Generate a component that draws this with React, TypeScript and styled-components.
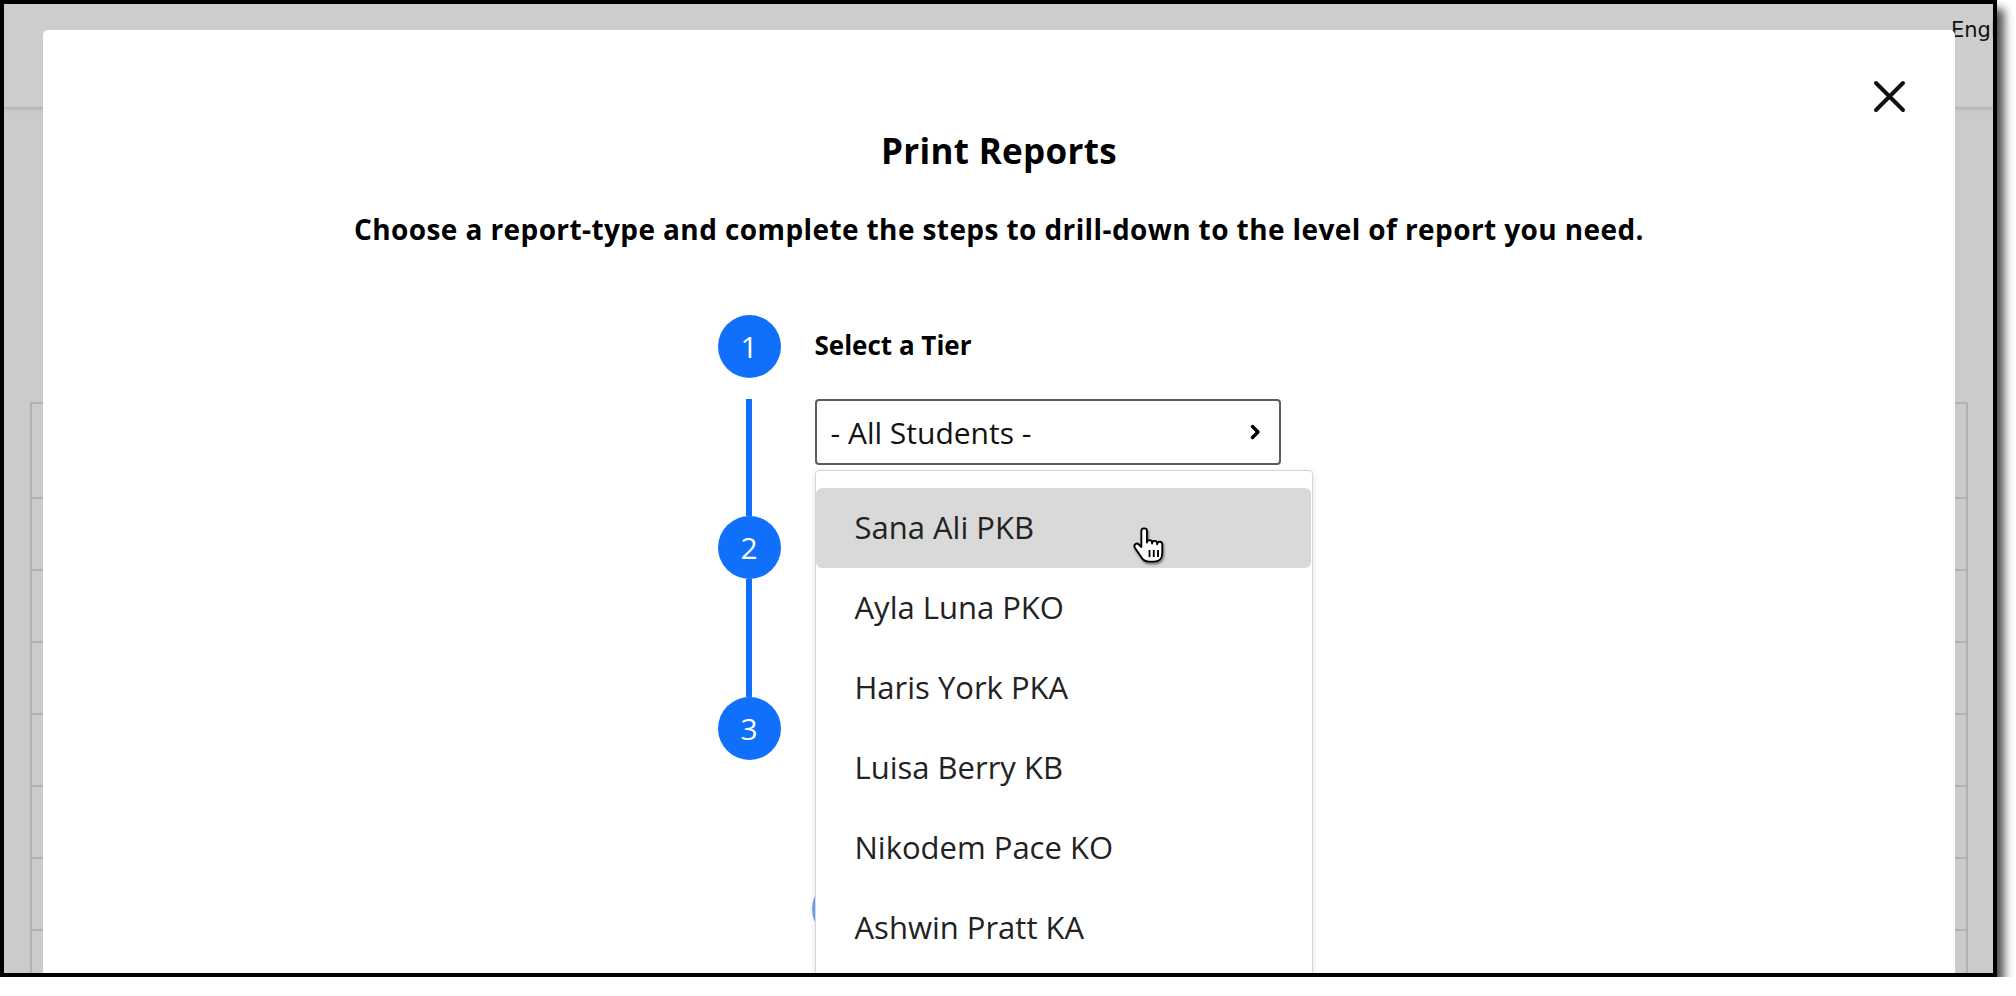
import React from "react";
import styled, { createGlobalStyle } from "styled-components";

const GlobalStyle = createGlobalStyle`
  html, body {
    margin: 0;
    padding: 0;
    background: #ffffff;
  }
  body {
    font-family: "Open Sans", "Liberation Sans", sans-serif;
  }
`;

const students = [
  "Sana Ali PKB",
  "Ayla Luna PKO",
  "Haris York PKA",
  "Luisa Berry KB",
  "Nikodem Pace KO",
  "Ashwin Pratt KA",
  "Milo Grant PKB",
];

const tableRows = [95, 72, 72, 72, 72, 72, 72, 72];

const steps = [
  { n: 1, label: "Select a Tier", value: "- All Students -", gap: 21, pad: 51, height: 66 },
  { n: 2, label: "Select a Student", value: "- Select -", gap: 3, pad: 49, height: 66 },
  { n: 3, label: "Select a Report", value: "- Select -", gap: 2, pad: 0, height: 64 },
];

const CloseIcon = () => (
  <svg width="33" height="33" viewBox="0 0 33 33" fill="none">
    <path d="M3 3 L30 30 M30 3 L3 30" stroke="#111" strokeWidth="4" strokeLinecap="round" />
  </svg>
);

const Chevron = () => (
  <svg width="12" height="16" viewBox="0 0 12 16" fill="none">
    <path d="M3.5 2.5 L9 8 L3.5 13.5" stroke="#000" strokeWidth="3.4" strokeLinecap="round" strokeLinejoin="round" />
  </svg>
);

const HandCursor = () => (
  <svg width="34" height="38" viewBox="0 0 20 22">
    <path
      d="M7 1.2 C6.2 1.2 5.5 1.9 5.5 2.7 V12.2 L4 10.7 C3.4 10.1 2.4 10.1 1.8 10.7 C1.3 11.2 1.3 12 1.7 12.6 L5.2 17.8 C6.2 19.6 7.6 20.8 10 20.8 H12.8 C15.9 20.8 17.8 18.8 17.8 15.8 V10.6 C17.8 9.8 17.1 9.1 16.3 9.1 C15.5 9.1 14.8 9.8 14.8 10.6 V10.1 C14.8 9.3 14.1 8.6 13.3 8.6 C12.5 8.6 11.8 9.3 11.8 10.1 V9.6 C11.8 8.8 11.1 8.1 10.3 8.1 C9.5 8.1 8.8 8.8 8.8 9.6 V2.7 C8.8 1.9 8.1 1.2 7.3 1.2 Z"
      fill="#fff"
      stroke="#000"
      strokeWidth="1.1"
      strokeLinejoin="round"
    />
    <path d="M10.3 14 V18 M12.8 14 V18 M15.3 14 V18" stroke="#000" strokeWidth="1.1" />
  </svg>
);

const App = () => {
  return (
    <>
      <GlobalStyle />
      <Frame>
        <Header>
          <Lang>English</Lang>
        </Header>
        <PageBody>
          <Table>
            {tableRows.map((h, i) => (
              <TableRow key={i} $height={h} />
            ))}
          </Table>
        </PageBody>

        <Modal>
          <CloseButton aria-label="Close">
            <CloseIcon />
          </CloseButton>
          <Title>Print Reports</Title>
          <Subtitle>
            Choose a report-type and complete the steps to drill-down to the level of report you need.
          </Subtitle>

          <Steps>
            {steps.map((s, i) => (
              <StepRow key={s.n}>
                <Rail>
                  <Circle>{s.n}</Circle>
                  {i < steps.length - 1 && <Connector $gap={i === 0 ? 21 : 0} />}
                </Rail>
                <StepBody $pad={s.pad}>
                  <StepLabel>{s.label}</StepLabel>
                  <FieldWrap $gap={s.gap}>
                    <SelectBox $height={s.height}>
                      <span>{s.value}</span>
                      <Chevron />
                    </SelectBox>
                    {i === 0 && (
                      <Dropdown>
                        {students.map((name, j) => (
                          <Option key={name} $active={j === 0}>
                            {name}
                          </Option>
                        ))}
                      </Dropdown>
                    )}
                  </FieldWrap>
                </StepBody>
              </StepRow>
            ))}
            <ButtonRow>
              <PrintButton disabled>Print</PrintButton>
            </ButtonRow>
          </Steps>
        </Modal>

        <Pointer>
          <HandCursor />
        </Pointer>
      </Frame>
    </>
  );
};

const Frame = styled.div`
  position: relative;
  box-sizing: border-box;
  width: 1997px;
  height: 977px;
  border: 4px solid #000;
  background: #cbcbcb;
  overflow: hidden;
  box-shadow: 7px 9px 9px rgba(0, 0, 0, 0.7);
`;

const Header = styled.div`
  height: 103px;
  background: #cdcdcd;
  box-shadow: 0 2px 4px rgba(0, 0, 0, 0.14);
  padding: 14px 0 0 1947px;
  box-sizing: border-box;
  white-space: nowrap;
  position: relative;
  z-index: 1;
`;

const Lang = styled.span`
  position: relative;
  z-index: 3;
  font-family: "DejaVu Sans", sans-serif;
  font-size: 21px;
  color: #111;
`;

const PageBody = styled.div`
  padding: 295px 25px 0 26px;
`;

const Table = styled.div`
  border: 2px solid #b1b1b1;
  border-bottom: none;
  display: flex;
  flex-direction: column;
`;

const TableRow = styled.div<{ $height: number }>`
  height: ${(p) => p.$height - 2}px;
  border-bottom: 2px solid #b1b1b1;
`;

const Modal = styled.div`
  position: absolute;
  left: 39px;
  top: 26px;
  width: 1912px;
  height: 1000px;
  background: #fff;
  border-radius: 5px;
  z-index: 2;
  display: flex;
  flex-direction: column;
  align-items: center;
`;

const CloseButton = styled.button`
  position: absolute;
  top: 50px;
  right: 49px;
  width: 33px;
  height: 33px;
  padding: 0;
  border: none;
  background: none;
  display: flex;
`;

const Title = styled.h1`
  margin: 100px 0 0;
  font-size: 35px;
  line-height: 42px;
  font-weight: 700;
  letter-spacing: 0.3px;
  color: #000;
`;

const Subtitle = styled.p`
  margin: 40px 0 0;
  font-size: 28px;
  line-height: 34px;
  font-weight: 700;
  letter-spacing: 0.4px;
  color: #000;
`;

const Steps = styled.div`
  margin-top: 69px;
  width: 563px;
  display: flex;
  flex-direction: column;
`;

const StepRow = styled.div`
  display: grid;
  grid-template-columns: 63px 466px;
  column-gap: 34px;
`;

const Rail = styled.div`
  display: flex;
  flex-direction: column;
  align-items: center;
`;

const Circle = styled.div`
  width: 63px;
  height: 63px;
  flex-shrink: 0;
  border-radius: 50%;
  background: #1170fb;
  color: #fff;
  font-size: 30px;
  display: flex;
  align-items: center;
  justify-content: center;
`;

const Connector = styled.div<{ $gap: number }>`
  flex: 1;
  width: 6px;
  margin-top: ${(p) => p.$gap}px;
  background: #1170fb;
`;

const StepBody = styled.div<{ $pad: number }>`
  padding-bottom: ${(p) => p.$pad}px;
`;

const StepLabel = styled.div`
  height: 63px;
  display: flex;
  align-items: center;
  padding-bottom: 4px;
  box-sizing: border-box;
  font-size: 26px;
  font-weight: 700;
  color: #000;
`;

const FieldWrap = styled.div<{ $gap: number }>`
  position: relative;
  margin-top: ${(p) => p.$gap}px;
`;

const SelectBox = styled.div<{ $height: number }>`
  box-sizing: border-box;
  height: ${(p) => p.$height}px;
  border: 2px solid #5c5c5c;
  border-radius: 4px;
  padding: 0 18px 0 14px;
  display: flex;
  align-items: center;
  justify-content: space-between;
  font-size: 30px;
  color: #111;
`;

const Dropdown = styled.div`
  position: absolute;
  top: 71px;
  left: 0;
  width: 498px;
  height: 560px;
  box-sizing: border-box;
  padding: 17px 1px 0 0;
  background: #fff;
  border: 1px solid #d6d6d6;
  border-radius: 4px;
  box-shadow: 0 2px 6px rgba(0, 0, 0, 0.12);
  z-index: 5;
`;

const Option = styled.div<{ $active: boolean }>`
  height: 80px;
  box-sizing: border-box;
  display: flex;
  align-items: center;
  padding: 0 0 3px 39px;
  border-radius: 6px;
  background: ${(p) => (p.$active ? "#d9d9d9" : "transparent")};
  font-size: 31px;
  color: #222;
`;

const ButtonRow = styled.div`
  margin: 53px 0 0 94px;
`;

const PrintButton = styled.button`
  height: 60px;
  padding: 0 40px;
  border: none;
  border-radius: 30px;
  background: #6fa5f8;
  color: #fff;
  font-family: "Open Sans", sans-serif;
  font-size: 24px;
  font-weight: 700;
`;

const Pointer = styled.div`
  position: absolute;
  left: 1128px;
  top: 522px;
  z-index: 10;
  filter: drop-shadow(1px 2px 1px rgba(0, 0, 0, 0.45));
  display: flex;
`;

export default App;
